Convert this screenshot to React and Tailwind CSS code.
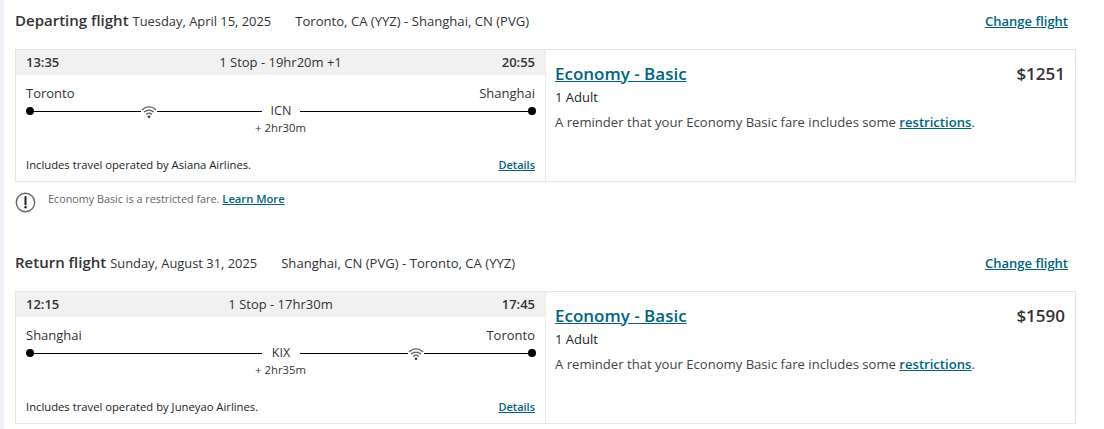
const link = 'text-[#00647f] underline font-semibold'

function Wifi() {
  return (
    <svg width="16" height="14" viewBox="0 0 16 14" fill="none" stroke="#5f5f5f" strokeWidth="1.4" strokeLinecap="round">
      <path d="M1.5 4.4C5 1 11 1 14.5 4.4" />
      <path d="M3.6 6.8C6 4.5 10 4.5 12.4 6.8" />
      <path d="M5.7 9.1C7 8 9 8 10.3 9.1" />
      <circle cx="8" cy="11.8" r="1.4" fill="#444" stroke="none" />
    </svg>
  )
}

function Flight({ title, date, route, dep, arr, summary, from, to, stop, layover, airline, price, wifiAfter, headH }) {
  const wifi = <span className="flex justify-center w-[16px] h-[14px] shrink-0 mt-px"><Wifi /></span>
  return (
    <section>
      <div className={`flex items-baseline pl-[11px] pr-[36px] ${headH}`}>
        <h2 className="text-[15px] font-semibold text-[#333]">{title}</h2>
        <span className="ml-[4px] text-[12.9px] text-[#333]">{date}</span>
        <span className="ml-[24px] text-[13.1px] text-[#333]">{route}</span>
        <a className={`ml-auto text-[13px] ${link}`}>Change flight</a>
      </div>
      <div className="ml-[11px] mr-[28px] h-[133px] border border-[#e6e6e6] flex">
        <div className="w-[530px] flex flex-col border-r border-dotted border-[#ddd] shrink-0">
          <div className="h-[25px] bg-[#f1f1f1] grid grid-cols-[1fr_auto_1fr] items-center px-[10px] text-[13px] text-[#333]">
            <b className="font-semibold">{dep}</b>
            <span>{summary}</span>
            <b className="font-semibold text-right">{arr}</b>
          </div>
          <div className="flex justify-between px-[10px] mt-[9px] text-[13px] leading-[18px] text-[#333]">
            <span>{from}</span>
            <span>{to}</span>
          </div>
          <div className="flex items-center pl-[10px] pr-[9px] h-[18px]">
            <span className="w-[8px] h-[8px] rounded-full bg-black shrink-0" />
            <div className="flex-1 flex items-center">
              {wifiAfter ? (
                <span className="h-px bg-black flex-1" />
              ) : (
                <>
                  <span className="h-px bg-black w-[107px]" />
                  {wifi}
                  <span className="h-px bg-black flex-1" />
                </>
              )}
            </div>
            <span className="w-[38px] text-center text-[12.5px] text-[#333] shrink-0">{stop}</span>
            <div className="flex-1 flex items-center">
              {wifiAfter ? (
                <>
                  <span className="h-px bg-black flex-1" />
                  {wifi}
                  <span className="h-px bg-black w-[104px]" />
                </>
              ) : (
                <span className="h-px bg-black flex-1" />
              )}
            </div>
            <span className="w-[8px] h-[8px] rounded-full bg-black shrink-0" />
          </div>
          <div className="text-center text-[11.3px] leading-[14px] text-[#333] mt-[1px]">{layover}</div>
          <div className="mt-auto mb-[7px] flex justify-between items-center px-[10px] text-[11.25px]">
            <span className="text-[#222]">Includes travel operated by {airline} Airlines.</span>
            <a className={`text-[11px] ${link}`}>Details</a>
          </div>
        </div>
        <div className="flex-1 pl-[9px] pr-[10px] pt-[11px]">
          <div className="flex justify-between items-center">
            <a className="text-[#00647f] underline font-semibold text-[17px] leading-[24px]">Economy - Basic</a>
            <span className="text-[17px] font-semibold text-[#333]">{price}</span>
          </div>
          <p className="text-[13px] leading-[18px] mt-[1px] text-[#222]">1 Adult</p>
          <p className="text-[13.1px] leading-[18px] mt-[7px] text-[#444]">
            A reminder that your Economy Basic fare includes some <a className={link}>restrictions</a>.
          </p>
        </div>
      </div>
    </section>
  )
}

export default function App() {
  return (
    <div className="w-[1104px] h-[429px] overflow-hidden bg-white border-l-[4px] border-[#f0f3f8] [font-family:'Open_Sans',sans-serif]">
      <Flight
        title="Departing flight"
        date="Tuesday, April 15, 2025"
        route="Toronto, CA (YYZ) - Shanghai, CN (PVG)"
        dep="13:35"
        arr="20:55"
        summary="1 Stop - 19hr20m +1"
        from="Toronto"
        to="Shanghai"
        stop="ICN"
        layover="+ 2hr30m"
        airline="Asiana"
        price="$1251"
        headH="h-[49px] pt-[9px]"
      />
      <div className="flex items-center pl-[11px] h-[36px] pb-[1px]">
        <svg className="mt-[6px]" width="21" height="21" viewBox="0 0 21 21" fill="none">
          <circle cx="10.5" cy="10.5" r="9.2" stroke="#666" strokeWidth="1.4" />
          <path d="M10.5 5v7.5" stroke="#222" strokeWidth="2" strokeLinecap="round" />
          <circle cx="10.5" cy="15.2" r="1.2" fill="#222" />
        </svg>
        <span className="ml-[12px] text-[10.8px] text-[#666]">Economy Basic is a restricted fare.</span>
        <a className={`ml-[3px] text-[11.2px] ${link}`}>Learn More</a>
      </div>
      <Flight
        title="Return flight"
        date="Sunday, August 31, 2025"
        route="Shanghai, CN (PVG) - Toronto, CA (YYZ)"
        dep="12:15"
        arr="17:45"
        summary="1 Stop - 17hr30m"
        from="Shanghai"
        to="Toronto"
        stop="KIX"
        layover="+ 2hr35m"
        airline="Juneyao"
        price="$1590"
        wifiAfter
        headH="h-[73px] pt-[33px]"
      />
    </div>
  )
}
